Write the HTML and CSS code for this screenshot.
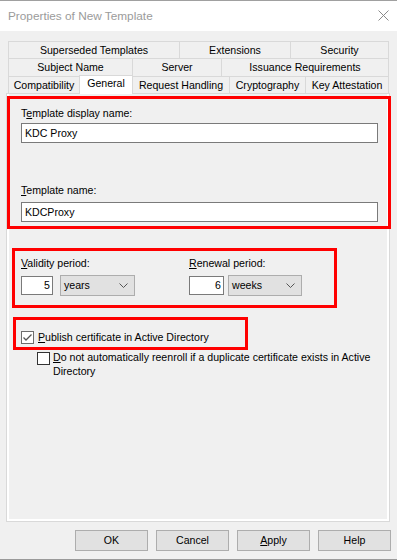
FILE: index.html
```html
<!DOCTYPE html>
<html>
<head>
<meta charset="utf-8">
<link rel="stylesheet" href="styles.css">
</head>
<body>
<div class="window">
  <div class="titlebar">
    <span class="title">Properties of New Template</span>
    <svg class="close" width="11" height="11" viewBox="0 0 11 11"><path d="M0.5 0.5 L10.5 10.5 M10.5 0.5 L0.5 10.5" stroke="#8a8a8a" stroke-width="1" fill="none"/></svg>
  </div>
  <div class="body">
    <div class="tabs">
      <div class="tabrow">
        <div class="tab t171">Superseded Templates</div>
        <div class="tab t111">Extensions</div>
        <div class="tab t99 last">Security</div>
      </div>
      <div class="tabrow">
        <div class="tab t124">Subject Name</div>
        <div class="tab t89">Server</div>
        <div class="tab t168 last">Issuance Requirements</div>
      </div>
      <div class="tabrow">
        <div class="tab t71">Compatibility</div>
        <div class="tab t54 selected">General</div>
        <div class="tab t97">Request Handling</div>
        <div class="tab t76">Cryptography</div>
        <div class="tab t84 last">Key Attestation</div>
      </div>
    </div>
    <div class="panel">
      <div class="redbox box-names">
        <div class="label lbl-first">T<span class="mn">e</span>mplate display name:</div>
        <div class="textbox wide tb-first">KDC Proxy</div>
        <div class="label lbl-second"><span class="mn">T</span>emplate name:</div>
        <div class="textbox wide tb-second">KDCProxy</div>
      </div>
      <div class="redbox box-periods">
        <div class="period-group group-validity">
          <div class="label"><span class="mn">V</span>alidity period:</div>
          <div class="controls">
            <div class="textbox num num-validity">5</div>
            <div class="select sel-validity">
              <span>years</span>
              <svg width="9" height="5" viewBox="0 0 9 5"><path d="M0.5 0.5 L4.5 4.5 L8.5 0.5" stroke="#555" stroke-width="1" fill="none"/></svg>
            </div>
          </div>
        </div>
        <div class="period-group">
          <div class="label"><span class="mn">R</span>enewal period:</div>
          <div class="controls">
            <div class="textbox num num-renewal">6</div>
            <div class="select sel-renewal">
              <span>weeks</span>
              <svg width="9" height="5" viewBox="0 0 9 5"><path d="M0.5 0.5 L4.5 4.5 L8.5 0.5" stroke="#555" stroke-width="1" fill="none"/></svg>
            </div>
          </div>
        </div>
      </div>
      <div class="redbox box-publish">
        <div class="check-row">
          <svg class="checkbox" width="13" height="13" viewBox="0 0 13 13"><rect x="0.5" y="0.5" width="12" height="12" fill="#fff" stroke="#6d6d6d"/><path d="M2.5 6.5 L5 9 L10.5 3.5" stroke="#555" stroke-width="1.3" fill="none"/></svg>
          <span class="check-label"><span class="mn">P</span>ublish certificate in Active Directory</span>
        </div>
      </div>
      <div class="check-row sub-check">
        <svg class="checkbox" width="13" height="13" viewBox="0 0 13 13"><rect x="0.5" y="0.5" width="12" height="12" fill="#fff" stroke="#333"/></svg>
        <span class="check-label wrap">Do not automatically reenroll if a duplicate certificate exists in Active Directory</span>
      </div>
    </div>
    <div class="buttons">
      <div class="btn">OK</div>
      <div class="btn">Cancel</div>
      <div class="btn"><span class="mn">A</span>pply</div>
      <div class="btn">Help</div>
    </div>
  </div>
</div>
</body>
</html>
```
FILE: styles.css
```css
* { box-sizing: border-box; }
html, body { margin: 0; padding: 0; }
body {
  font-family: "Liberation Sans", Arial, sans-serif;
  font-size: 10.6px;
  color: #000;
  background: #fff;
}
.window {
  width: 397px;
  height: 560px;
  display: flex;
  flex-direction: column;
  border-top: 1px solid #a0a0a0;
  border-bottom: 1px solid #9a9a9a;
}
.titlebar {
  height: 30px;
  background: #fff;
  display: flex;
  justify-content: space-between;
  align-items: flex-start;
}
.title {
  font-size: 11.8px;
  line-height: 14px;
  color: #9b9b9b;
  padding-left: 8px;
  padding-top: 8px;
}
.close {
  margin-top: 9px;
  margin-right: 8px;
}
.body {
  flex: 1;
  background: #f0f0f0;
  display: flex;
  flex-direction: column;
}
.tabs {
  margin-left: 8px;
  margin-top: 10px;
  width: 381px;
}
.tabrow {
  display: flex;
  height: 17px;
}
.tabrow:nth-child(2) { height: 18px; }
.tab {
  height: 100%;
  border-top: 1px solid #d9d9d9;
  border-left: 1px solid #d9d9d9;
  text-align: center;
  white-space: nowrap;
  line-height: 16px;
  overflow: hidden;
}
.tab.last { border-right: 1px solid #d9d9d9; }
.tab.selected {
  position: relative;
  z-index: 2;
  background: #fff;
  margin-top: -1px;
  height: 19px;
  border-right: 1px solid #d9d9d9;
  line-height: 15px;
  margin-right: -1px;
}
.t171 { width: 171px; }
.t111 { width: 111px; }
.t99 { width: 99px; }
.t124 { width: 124px; }
.t89 { width: 89px; }
.t168 { width: 168px; }
.t71 { width: 71px; }
.t54 { width: 54px; }
.t97 { width: 97px; }
.t76 { width: 76px; }
.t84 { width: 84px; }

.panel {
  margin-left: 6px;
  width: 384px;
  height: 429px;
  border: 1px solid #d9d9d9;
  box-shadow: inset 2px 0 0 #fff, inset -2px -2px 0 #fff;
  position: relative;
  z-index: 1;
}
.redbox {
  border: 3px solid #ff0000;
}
.box-names {
  margin-top: 2px;
  width: 384px;
  height: 133px;
  padding: 8px 0 0 11px;
}
.label {
  line-height: 13px;
  height: 13px;
  white-space: nowrap;
}
.mn { text-decoration: underline; }
.textbox {
  background: #fff;
  border: 1px solid #7a7a7a;
  line-height: 18px;
  height: 20px;
  padding: 0 3px;
  white-space: nowrap;
}
.wide { width: 357px; }
.tb-first { margin-top: 3px; }
.lbl-second { margin-top: 41px; }
.tb-second { margin-top: 5px; }

.box-periods {
  margin-top: 19px;
  margin-left: 5px;
  width: 325px;
  height: 60px;
  padding: 6px 0 0 6px;
  display: flex;
}
.group-validity { width: 168px; }
.controls {
  display: flex;
  align-items: center;
  height: 21px;
  margin-top: 5px;
}
.num {
  height: 19px;
  line-height: 17px;
  text-align: right;
  padding: 0 2px 0 2px;
}
.num-validity { width: 32px; }
.num-renewal { width: 35px; }
.select {
  height: 21px;
  border: 1px solid #adadad;
  background: #e1e1e1;
  display: flex;
  align-items: center;
  justify-content: space-between;
  padding: 0 6px 0 3px;
  line-height: 19px;
}
.sel-validity { width: 75px; margin-left: 7px; }
.sel-renewal { width: 74px; margin-left: 4px; }

.box-publish {
  margin-top: 9px;
  margin-left: 6px;
  width: 235px;
  height: 33px;
  padding: 10px 0 0 5px;
}
.check-row {
  display: flex;
  align-items: flex-start;
}
.checkbox {
  flex: none;
  margin-top: 1px;
}
.check-label {
  margin-left: 4px;
  line-height: 14px;
  white-space: nowrap;
}
.sub-check {
  margin-left: 30px;
  margin-top: 0;
}
.sub-check .checkbox { margin-top: 2px; }
.check-label.wrap {
  margin-left: 3px;
  white-space: normal;
  max-width: 325px;
}
.check-label.wrap::first-letter { text-decoration: underline; }

.buttons {
  display: flex;
  gap: 8px;
  padding-left: 75px;
  margin-top: 8px;
}
.btn {
  width: 73px;
  height: 21px;
  border: 1px solid #adadad;
  background: #e1e1e1;
  text-align: center;
  line-height: 19px;
}
```
